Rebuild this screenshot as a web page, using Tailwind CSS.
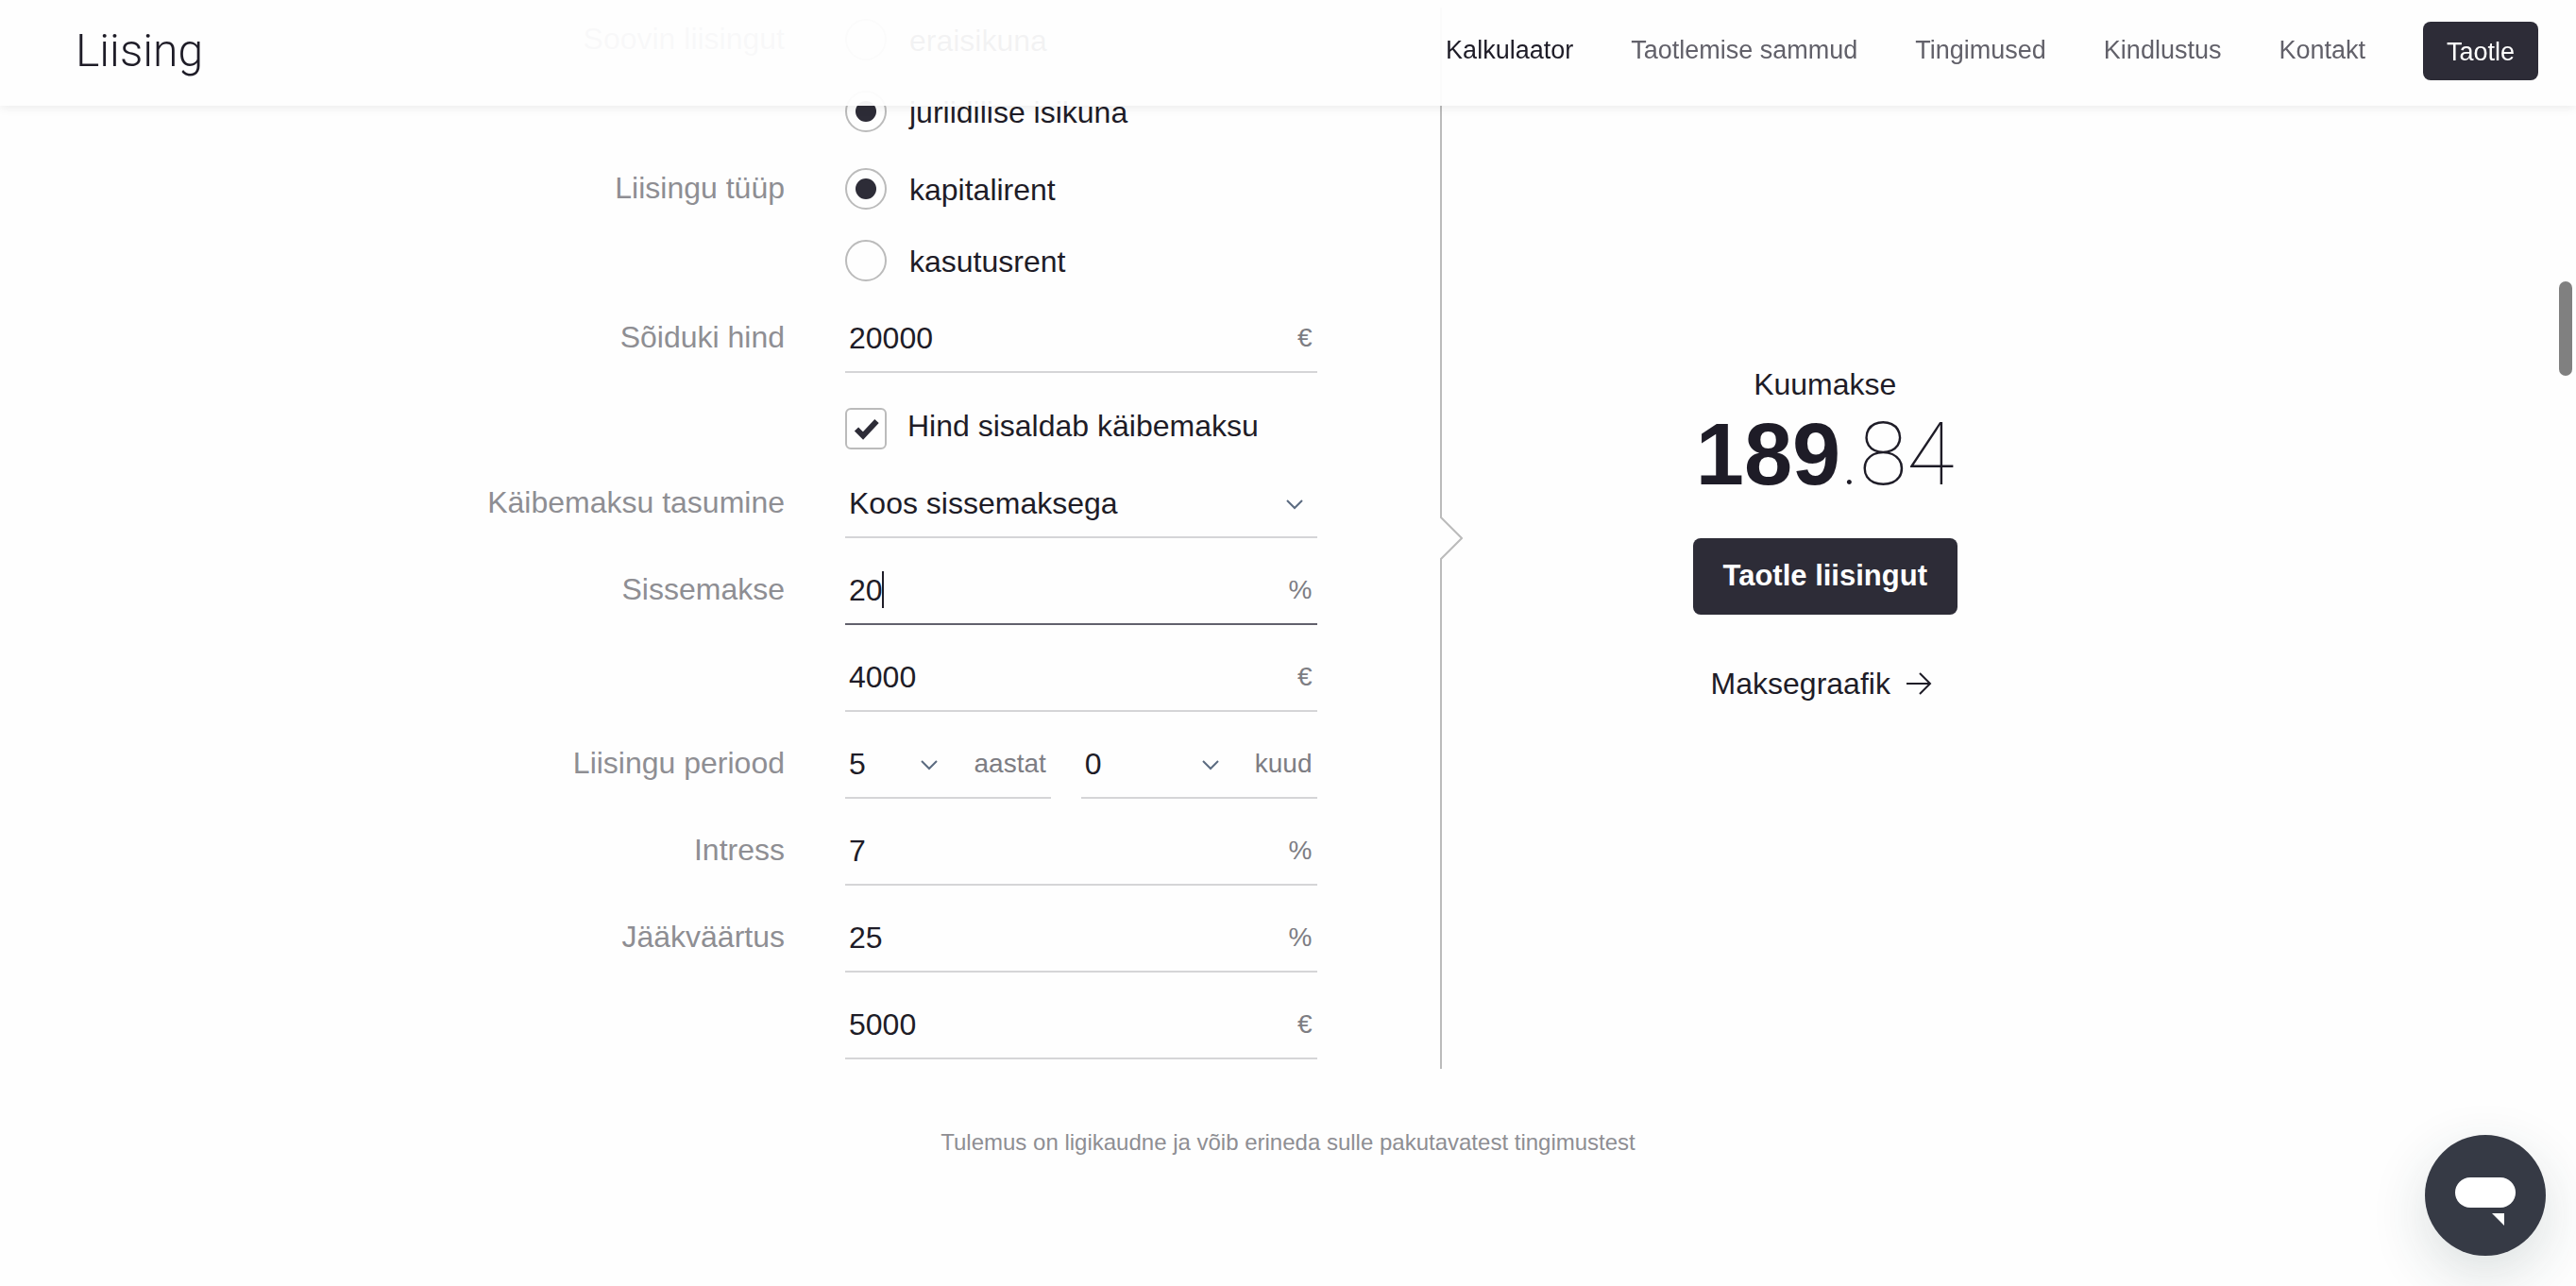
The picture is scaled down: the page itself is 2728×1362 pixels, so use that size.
<!DOCTYPE html>
<html lang="et">
<head>
<meta charset="utf-8">
<meta name="viewport" content="width=device-width, initial-scale=1">
<title>Liising</title>
<script src="https://cdn.jsdelivr.net/npm/@tailwindcss/browser@4"></script>
</head>
<body class="relative min-h-screen overflow-x-hidden bg-[#fefefe] font-['Liberation_Sans',Arial,sans-serif] text-[32px] text-[#1e1c27]">

<header class="fixed inset-x-0 top-0 z-10 flex h-28 items-start justify-between bg-[#fefefe]/95 pr-10 pl-20 shadow-[0_2px_10px_rgba(0,0,0,0.08)]">
  <a href="#" class="pt-6 font-[Roboto,sans-serif] text-[48px] leading-[60px] font-light">Liising</a>
  <nav class="flex items-start gap-[61px] pt-[23px] text-[27px] leading-[60px] text-[#62616a]">
    <a href="#kalkulaator" class="text-[#1e1c27]">Kalkulaator</a>
    <a href="#sammud">Taotlemise sammud</a>
    <a href="#tingimused">Tingimused</a>
    <a href="#kindlustus">Kindlustus</a>
    <a href="#kontakt">Kontakt</a>
    <button type="button" class="h-[62px] w-[122px] rounded-lg bg-[#2d2c37] pt-[2px] text-[27px] text-white">Taotle</button>
  </nav>
</header>

<main id="kalkulaator" class="mx-auto w-full max-w-[1950px] pt-2">
  <div class="flex">
    <form class="relative w-7/12 border-r-2 border-[#bbb] pt-3 pr-[130px] pb-[10px]">

      <div role="radiogroup" aria-labelledby="kes" class="grid grid-cols-[442px_1fr] gap-x-16">
        <span id="kes" class="text-right leading-[42px] text-[#8e8e93]">Soovin liisingut</span>
        <div class="flex flex-col gap-8">
          <label class="flex h-11 items-center gap-6 leading-[46px]"><input type="radio" name="isik" class="size-11 appearance-none rounded-full border-2 border-[#bbb] bg-clip-content p-[9px] checked:bg-[#2d2c37]"><span class="pt-[2px]">eraisikuna</span></label>
          <label class="flex h-11 items-center gap-6 leading-[46px]"><input type="radio" name="isik" checked class="size-11 appearance-none rounded-full border-2 border-[#bbb] bg-clip-content p-[9px] checked:bg-[#2d2c37]"><span class="pt-[2px]">juriidilise isikuna</span></label>
        </div>
      </div>

      <div role="radiogroup" aria-labelledby="tyyp" class="mt-[38px] grid grid-cols-[442px_1fr] gap-x-16">
        <span id="tyyp" class="text-right leading-[42px] text-[#8e8e93]">Liisingu tüüp</span>
        <div class="flex flex-col gap-8">
          <label class="flex h-11 items-center gap-6 leading-[46px]"><input type="radio" name="tyyp" checked class="size-11 appearance-none rounded-full border-2 border-[#bbb] bg-clip-content p-[9px] checked:bg-[#2d2c37]"><span class="pt-[2px]">kapitalirent</span></label>
          <label class="flex h-11 items-center gap-6 leading-[46px]"><input type="radio" name="tyyp" class="size-11 appearance-none rounded-full border-2 border-[#bbb] bg-clip-content p-[9px] checked:bg-[#2d2c37]"><span class="pt-[2px]">kasutusrent</span></label>
        </div>
      </div>

      <div class="mt-[27px] grid grid-cols-[442px_1fr] gap-x-16">
        <label for="hind" class="text-right leading-[64px] text-[#8e8e93]">Sõiduki hind</label>
        <div class="flex h-[70px] items-center border-b-2 border-[#d5d5d7] pr-[5px] pb-[2px] pl-1">
          <input id="hind" type="text" value="20000" class="min-w-0 flex-1 outline-none">
          <span class="text-[28px] text-[#7d7d83]">€</span>
        </div>
        <label class="col-start-2 mt-[37px] flex gap-[22px]">
          <span class="relative size-11">
            <input type="checkbox" checked class="peer block size-11 appearance-none rounded-md border-2 border-[#bbb]">
            <svg class="absolute inset-0 hidden size-11 peer-checked:block" viewBox="0 0 44 44"><path d="M12 22.5 L19 29.5 L33.500 14" fill="none" stroke="#2d2c37" stroke-width="6"/></svg>
          </span>
          <span class="leading-[38px]">Hind sisaldab käibemaksu</span>
        </label>
      </div>

      <div class="mt-6 grid grid-cols-[442px_1fr] gap-x-16 gap-y-[22px]">
        <label for="kaibemaks" class="text-right leading-[64px] text-[#8e8e93]">Käibemaksu tasumine</label>
        <div class="flex h-[70px] items-center border-b-2 border-[#d5d5d7] pr-[15px] pb-[2px] pl-1">
          <select id="kaibemaks" class="min-w-0 flex-1 appearance-none outline-none"><option>Koos sissemaksega</option></select>
          <svg class="mt-[2px] h-3 w-[18px]" viewBox="0 0 18 12"><path d="M1 2 L9 10 L17 2" fill="none" stroke="#5b6b80" stroke-width="2"/></svg>
        </div>

        <label for="sissemakse" class="text-right leading-[64px] text-[#8e8e93]">Sissemakse</label>
        <div class="relative flex h-[70px] items-center border-b-2 border-[#62616c] pr-[5px] pb-[2px] pl-1">
          <input id="sissemakse" type="text" value="20" class="min-w-0 flex-1 outline-none">
          <span class="absolute top-[13px] left-[39px] h-[39px] w-[2px] bg-[#1e1c27]"></span>
          <span class="text-[28px] text-[#7d7d83]">%</span>
        </div>

        <div class="col-start-2 flex h-[70px] items-center border-b-2 border-[#d5d5d7] pr-[5px] pb-[2px] pl-1">
          <input type="text" value="4000" aria-label="Sissemakse eurodes" class="min-w-0 flex-1 outline-none">
          <span class="text-[28px] text-[#7d7d83]">€</span>
        </div>

        <label for="aastad" class="text-right leading-[64px] text-[#8e8e93]">Liisingu periood</label>
        <div class="grid grid-cols-[218fr_250fr] gap-8">
          <div class="flex h-[70px] items-center border-b-2 border-[#d5d5d7] pr-[5px] pb-[2px] pl-1">
            <select id="aastad" class="min-w-0 flex-1 appearance-none outline-none"><option>5</option></select>
            <svg class="mt-[2px] h-3 w-[18px]" viewBox="0 0 18 12"><path d="M1 2 L9 10 L17 2" fill="none" stroke="#5b6b80" stroke-width="2"/></svg>
            <span class="ml-[38px] text-[28px] text-[#7d7d83]">aastat</span>
          </div>
          <div class="flex h-[70px] items-center border-b-2 border-[#d5d5d7] pr-[5px] pb-[2px] pl-1">
            <select aria-label="Kuud" class="min-w-0 flex-1 appearance-none outline-none"><option>0</option></select>
            <svg class="mt-[2px] h-3 w-[18px]" viewBox="0 0 18 12"><path d="M1 2 L9 10 L17 2" fill="none" stroke="#5b6b80" stroke-width="2"/></svg>
            <span class="ml-[38px] text-[28px] text-[#7d7d83]">kuud</span>
          </div>
        </div>

        <label for="intress" class="text-right leading-[64px] text-[#8e8e93]">Intress</label>
        <div class="flex h-[70px] items-center border-b-2 border-[#d5d5d7] pr-[5px] pb-[2px] pl-1">
          <input id="intress" type="text" value="7" class="min-w-0 flex-1 outline-none">
          <span class="text-[28px] text-[#7d7d83]">%</span>
        </div>

        <label for="jaak" class="text-right leading-[64px] text-[#8e8e93]">Jääkväärtus</label>
        <div class="flex h-[70px] items-center border-b-2 border-[#d5d5d7] pr-[5px] pb-[2px] pl-1">
          <input id="jaak" type="text" value="25" class="min-w-0 flex-1 outline-none">
          <span class="text-[28px] text-[#7d7d83]">%</span>
        </div>

        <div class="col-start-2 flex h-[70px] items-center border-b-2 border-[#d5d5d7] pr-[5px] pb-[2px] pl-1">
          <input type="text" value="5000" aria-label="Jääkväärtus eurodes" class="min-w-0 flex-1 outline-none">
          <span class="text-[28px] text-[#7d7d83]">€</span>
        </div>
      </div>

      <svg class="absolute top-1/2 -right-6 h-[46px] w-6 -translate-y-1/2 bg-[#fefefe]" viewBox="0 0 24 46"><path d="M1 0 V1 L23 23 L1 45 V46" fill="none" stroke="#bbb" stroke-width="2"/></svg>
    </form>

    <section class="flex w-5/12 flex-col items-center justify-center pb-2">
      <h2 class="leading-[36px]">Kuumakse</h2>
      <p class="text-[92px] leading-[112px]"><strong class="font-bold">189</strong><span class="font-[Roboto,sans-serif] font-thin">.84</span></p>
      <button type="button" class="mt-8 h-[81px] rounded-lg bg-[#2d2c37] px-8 text-[31px] font-bold text-white">Taotle liisingut</button>
      <a href="#maksegraafik" class="mt-[53px] mr-2 flex items-center gap-4 leading-[40px]">Maksegraafik
        <svg class="size-7" viewBox="0 0 28 28"><path d="M1 14 H26 M15 3 L26 14 L15 25" fill="none" stroke="#1e1c27" stroke-width="2"/></svg>
      </a>
    </section>
  </div>
  <p class="mt-16 pb-20 text-center text-[24px] leading-[28px] text-[#8e8e93]">Tulemus on ligikaudne ja võib erineda sulle pakutavatest tingimustest</p>
</main>

<div class="fixed top-[298px] right-1 z-20 h-[100px] w-[14px] rounded-full bg-[#808080]"></div>

<button type="button" aria-label="Vestlus" class="fixed right-8 bottom-8 z-20 size-32 rounded-full bg-[#363a45] shadow-[0_20px_60px_rgba(30,60,60,0.16)]">
  <svg class="size-32" viewBox="0 0 128 128" fill="#fff"><rect x="32" y="45" width="64" height="32" rx="16"/><path d="M71 83 H84 V96 Z"/></svg>
</button>
</body>
</html>
